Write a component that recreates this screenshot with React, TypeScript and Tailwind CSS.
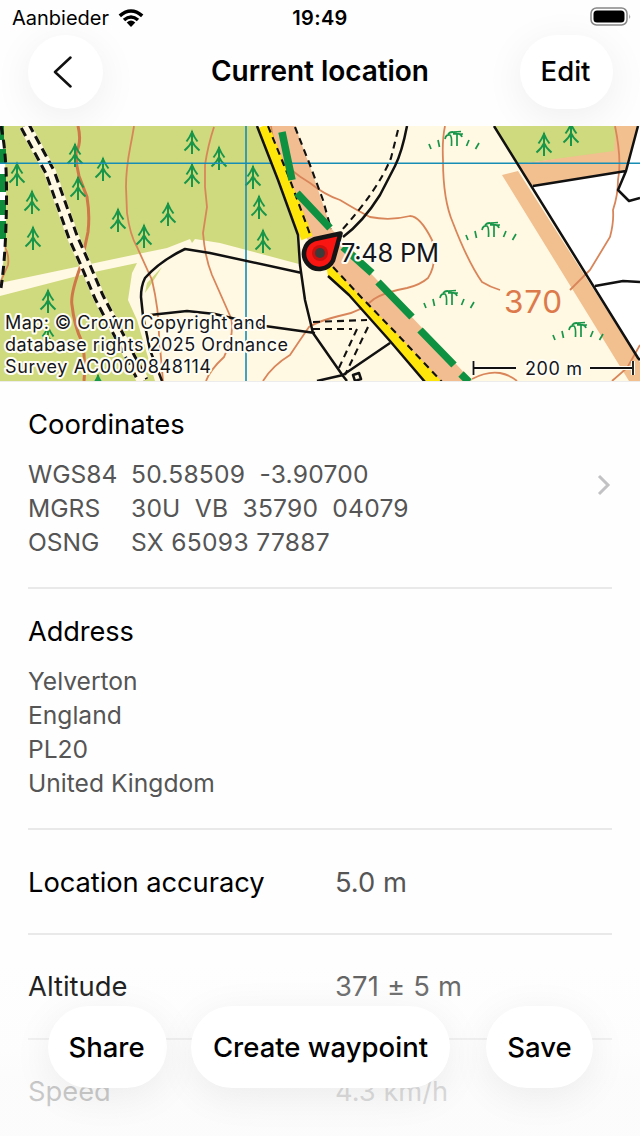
import React from "react";

const TREES: [number, number][] = [
  [192, 131], [192, 164], [75, 144], [103, 158], [78, 177], [17, 163], [32, 191], [33, 227],
  [118, 209], [144, 225], [168, 203], [219, 147], [253, 166], [259, 196], [263, 230],
  [48, 290], [48, 326], [98, 375], [544, 133], [571, 123],
];

const GRASS: [number, number][] = [[453, 133], [490, 224], [448, 292], [577, 324]];

const CONTOURS = [
  "M134 126C130 152 126 160 126 187L127 213Q130 235 137 247L152 280Q159 310 159 335L163 381",
  "M214 127Q208 145 205 165L205 187L207 207L203 233Q205 258 212 275L231 318Q235 333 224 357Q210 370 206 381",
  "M271 126Q273 146 280 157Q288 170 310 183Q325 195 340 200Q360 212 370 217Q390 221 410 216Q420 216 432 240Q438 262 428 278Q420 285 407 288Q385 292 374 299Q360 312 343 315Q318 321 309 327Q300 340 290 355Q272 366 263 381",
  "M445 126Q442 140 443 160Q443 200 453 223Q468 262 482 282Q490 287 500 290",
  "M570 290L590 270L610 237Q614 222 613 210Q618 195 618 180Q622 160 615 126",
  "M472 379Q487 371 500 373Q510 375 517 381",
  "M612 381L627 368L640 345",
  "M0 240Q10 251 8 265L0 283",
];

const FOREST_TRACK = "M25 126L50 172L61 203L73 237L85 264L99 297L112 322L143 381";

function Halo({ x, y, size, width, children }: { x: number; y: number; size: number; width: number; children: string }) {
  return (
    <text x={x} y={y} fontSize={size} textLength={width} fill="#14161c" stroke="#fffdf3" strokeWidth="4" strokeLinejoin="round" paintOrder="stroke">
      {children}
    </text>
  );
}

function MapView() {
  return (
    <svg viewBox="0 126 640 255" className="block h-[255px] w-full shrink-0" fontFamily="Inter, 'Liberation Sans', sans-serif" fill="none">
      <rect y="126" width="640" height="255" fill="#fff8e2" />
      <path fill="#cfd97d" d="M0 126H257L297 235L299 264L220 243L195 239L192 243L190 239L167 248L133 255L0 283ZM0 296L85 274L137 263L132 273L128 300L137 320L155 381H0ZM147 283L162 267L152 283L145 293Z" />
      <path fill="#cfd97d" d="M494 126H616V152L518 164Z" />
      <path fill="#f2bf8f" d="M616 126H638L626 171L532 186L518 164L614 151ZM502 175L518 171L640 362V381H629Z" />
      <path fill="#fff" d="M532 186L626 171L638 126H640V362Z" />
      <path fill="#f2bd90" d="M270 126H295L313 175L331 228L345 246L472 381H440L330 268L304 235Z" />

      <path d="M78 126Q82 142 76 153Q76 165 79 176L87 197Q90 215 88 232L81 265Q70 295 72 305Q74 325 82 342Q86 360 84 381" stroke="#cf7748" strokeWidth="3" />
      {CONTOURS.map((d) => <path key={d} d={d} stroke="#d9855a" strokeWidth="1.8" />)}

      <path d={FOREST_TRACK} stroke="#fff8e2" strokeWidth="12" />
      <path d={FOREST_TRACK} stroke="#111" strokeWidth="11.500" strokeDasharray="9 5" />
      <path d={FOREST_TRACK} stroke="#fff8e2" strokeWidth="5.500" />

      <path d="M0 126H2Q7 170 6 215Q5 260 0 283Z" fill="#fff" />
      <path d="M1 126V140M3 149V164M3 174V192M3 200V215M3 221V239" stroke="#0f8b3c" strokeWidth="6" />
      <path d="M1 126Q7 155 6.500 200Q6 255 1 288" stroke="#111" strokeWidth="3" strokeDasharray="9 5" />

      <g stroke="#17964a" strokeWidth="2">
        {TREES.map(([x, y]) => (
          <path key={`${x}-${y}`} transform={`translate(${x} ${y})`} d="M0 0V23M-5.5 10.500Q-2 6 0 1Q2 6 5.500 10.500M-7.500 19.500Q-2 15 0 10Q2 15 7.500 19.500" />
        ))}
      </g>
      <g stroke="#17964a" strokeWidth="1.7">
        {GRASS.map(([x, y]) => (
          <path key={`${x}-${y}`} transform={`translate(${x} ${y})`} d="M-24 11L-22 16M-15 7L-13.500 14M-8 6Q-7 1 -3 2Q-1 3 -1.500 13M-5 1Q-1 -3 4 1M0 1H10M4 0V13M1 -1L8 -1.500M4 1Q8 0 9 4M16 7L13.500 13M26 10L22.500 16" />
        ))}
      </g>
      <path d="M0 163.300H640M246 126V381" stroke="#168db5" strokeWidth="1.6" />

      <path d="M263 126L284 180L307 238" stroke="#ffe60a" strokeWidth="12" />
      <path d="M328 276L349 295L390 341L425 381H441L397 334L361 297L333 268L325 260Z" fill="#ffe60a" />
      <g stroke="#111" strokeWidth="2.500" strokeLinejoin="round">
        <path d="M257 126L278 180L298 235L300 265L305 300L313 333L343 376L347 381M328 276L349 295L390 341L425 382M302 273L210 253L185 249Q160 261 145 278Q141 286 141 297L143 316L150 350L162 381M150 315L187 311L215 314L265 326L315 333M390 343L343 375L317 381" />
        <path d="M407 126Q402 152 395 166L380 195Q363 222 343 237M494 126L638 358L640 360M533 186L626 171M638 126L626 171L618 190L629 201L640 198M595 286L623 281L640 282" />
        <g strokeDasharray="7 5" strokeWidth="2.100">
          <path d="M268 126L290 180L311 237M333 267L361 297L397 334L442 382M295 127L310 165L323 200L331 229M398 130L391 158Q378 190 341 231" />
          <path d="M313 322L367 320M313 329H352M357 329L338 370M368 327L345 375" />
        </g>
        <path d="M353 375L359 373L361 379L355 381Z" />
      </g>
      <path d="M282 132L292 180M297 193L330 228M343 247L372 273M378 282L412 317M420 330L454 365M461 374L469 382" stroke="#0f9142" strokeWidth="7.500" />

      <text x="504" y="313" fontSize="31.500" textLength="58" fill="#dd7a4c">370</text>

      <path d="M340.500 233.500L314 239.300A15.300 15.300 0 1 0 333 260.500Z" fill="#f91512" stroke="#151515" strokeWidth="4.600" strokeLinejoin="round" />
      <circle cx="320" cy="253" r="8" fill="#c9100e" />
      <circle cx="320" cy="253" r="5" fill="#3d3a3a" />
      <Halo x={341} y={261.500} size={25.500} width={98}>7:48 PM</Halo>
      <Halo x={5} y={329} size={18} width={261}>Map: © Crown Copyright and</Halo>
      <Halo x={5} y={351} size={18} width={283}>database rights 2025 Ordnance</Halo>
      <Halo x={5} y={372.500} size={18} width={206}>Survey AC0000848114</Halo>
      <path d="M473.500 361V375M474 368H516M590 368H632M633 361V375" stroke="#fffdf3" strokeWidth="4" />
      <path d="M473.500 361V375M474 368H516M590 368H632M633 361V375" stroke="#111" strokeWidth="1.8" />
      <Halo x={525} y={374.500} size={18} width={57}>200 m</Halo>
    </svg>
  );
}

function StatusBar() {
  return (
    <div className="grid h-9 grid-cols-3 items-center pr-2 pl-3 text-[20px] leading-6">
      <div className="flex items-center gap-[9px]">
        <span>Aanbieder</span>
        <svg className="h-[18px] w-[26px]" viewBox="0 0 26 18" fill="none" stroke="#000" strokeWidth="3.6">
          <path d="M1.800 6.800Q13-2.800 24.200 6.800M6 11Q13 5 20 11" />
          <path d="M8.700 13.500Q13 9.700 17.300 13.500L13 18Z" fill="#000" stroke="none" />
        </svg>
      </div>
      <span className="-ml-1 text-center font-semibold tracking-[0.3px]">19:49</span>
      <svg className="-mt-1 h-[19px] w-[42px] justify-self-end" viewBox="0 0 42 19" fill="none">
        <rect x="1" y="1" width="36" height="17" rx="5.500" stroke="#888" strokeWidth="1.500" />
        <rect x="3.500" y="3.500" width="31" height="12" rx="3.500" fill="#000" />
        <path d="M39.300 7V12Q41 9.500 39.300 7Z" fill="#888" />
      </svg>
    </div>
  );
}

function PillButton({ className, children }: { className: string; children: React.ReactNode }) {
  return (
    <button className={`flex shrink-0 items-center justify-center whitespace-nowrap rounded-full bg-white text-[27.5px] font-medium shadow-[0_8px_40px_rgba(0,0,0,0.065)] ${className}`}>
      {children}
    </button>
  );
}

export default function App() {
  return (
    <div className="relative flex h-[1136px] w-[640px] flex-col overflow-hidden bg-[#fefefe] font-['Inter','Liberation_Sans',sans-serif] text-black">
      <header className="h-[126px] shrink-0">
        <StatusBar />
        <div className="-mt-px flex items-center justify-between pr-[27px] pl-7">
          <div className="flex w-[92px]">
            <PillButton className="h-[74px] w-[75px]">
              <svg className="mr-1.5 h-8 w-5" viewBox="0 0 20 32" fill="none" stroke="#111" strokeWidth="2.500" strokeLinecap="round" strokeLinejoin="round">
                <path d="M17.500 1.500L2 16L17.500 30.500" />
              </svg>
            </PillButton>
          </div>
          <h1 className="-mt-0.5 text-[28px] font-semibold tracking-[-0.05px]">Current location</h1>
          <PillButton className="h-[74px] w-[93px] pr-0.5">Edit</PillButton>
        </div>
      </header>
      <MapView />
      <main className="flex flex-col border-t border-[#ececec] px-7">
        <section className="flex h-[207px] items-center justify-between border-b-2 border-[#e9e9e9]">
          <div className="self-start pt-6">
            <h2 className="text-[27.4px] leading-9">Coordinates</h2>
            <div className="mt-[15px] grid grid-cols-[103px_auto] whitespace-pre text-[24.6px] leading-[34px] text-[#555]">
              <span>WGS84</span><span className="tracking-[0.22px]">50.58509  -3.90700</span>
              <span>MGRS</span><span className="tracking-[0.2px]">30U  VB  35790  04079</span>
              <span>OSNG</span><span className="tracking-[0.32px]">SX 65093 77887</span>
            </div>
          </div>
          <svg className="h-6 w-4" viewBox="0 0 16 24" fill="none" stroke="#c2c2c4" strokeWidth="3">
            <path d="M3 3L12 12L3 21" />
          </svg>
        </section>
        <section className="h-[241px] border-b-2 border-[#e9e9e9] pt-[25px]">
          <h2 className="text-[27.2px] leading-9 tracking-[-0.1px]">Address</h2>
          <div className="mt-3.5 flex flex-col text-[24.6px] leading-[34px] text-[#555]">
            <span>Yelverton</span><span>England</span><span>PL20</span><span>United Kingdom</span>
          </div>
        </section>
        <div className="grid h-[105px] grid-cols-[307px_auto] items-center border-b-2 border-[#e9e9e9] pt-[3px] text-[27.3px]">
          <span className="tracking-[-0.05px]">Location accuracy</span><span className="text-[#555]">5.0 m</span>
        </div>
        <div className="grid h-[105px] grid-cols-[307px_auto] items-center border-b-2 border-[#e9e9e9] pt-px text-[27.4px]">
          <span>Altitude</span><span className="tracking-[0.2px] text-[#555]">371 ± 5 m</span>
        </div>
        <div className="grid h-[105px] grid-cols-[307px_auto] items-center text-[27.3px]">
          <span>Speed</span><span className="text-[#555]">4.3 km/h</span>
        </div>
      </main>
      <div className="absolute inset-x-0 bottom-0 h-[176px] bg-linear-to-b from-[#fcfcfc]/0 via-[#fcfcfc]/45 to-[#fbfbfb]/80 to-70%" />
      <footer className="absolute inset-x-0 bottom-12 flex h-[82px] pr-[47px] pl-12">
        <PillButton className="h-[82px] w-[119px] pt-0.5 pr-0.5">Share</PillButton>
        <PillButton className="ml-6 h-[82px] w-[259px] pt-0.5">Create waypoint</PillButton>
        <PillButton className="ml-9 h-[82px] w-[107px] pt-0.5">Save</PillButton>
      </footer>
    </div>
  );
}
